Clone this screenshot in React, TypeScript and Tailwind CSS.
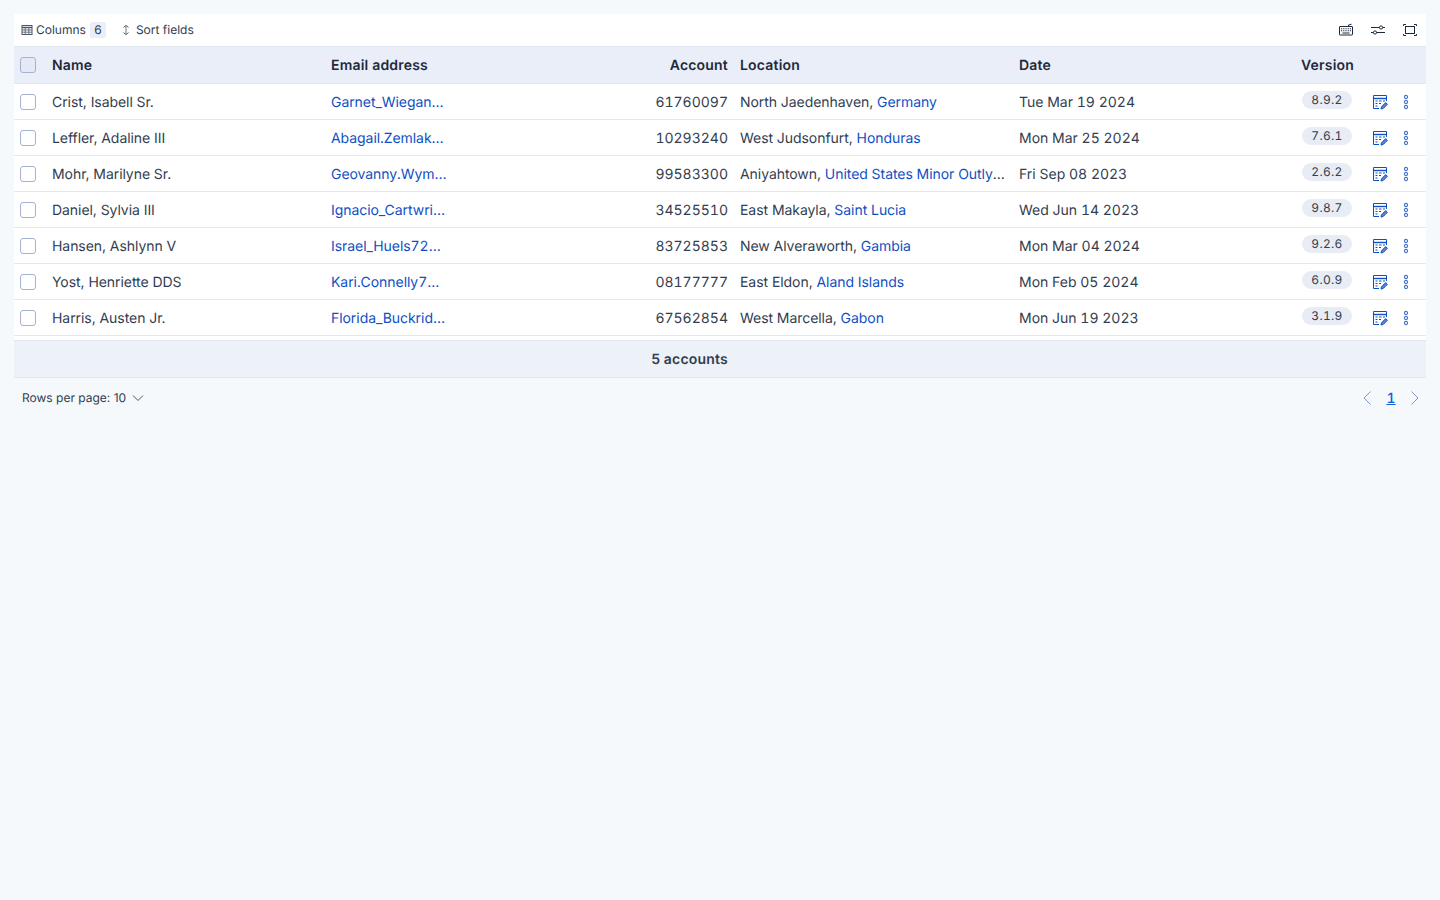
import React from "react"

type Row = {
    name: string
    email: string
    account: string
    city: string
    country: string
    date: string
    version: string
}

const rows: Row[] = [
    { name: "Crist, Isabell Sr.", email: "Garnet_Wiegand42@hotmail.com", account: "61760097", city: "North Jaedenhaven", country: "Germany", date: "Tue Mar 19 2024", version: "8.9.2" },
    { name: "Leffler, Adaline III", email: "Abagail.Zemlak18@gmail.com", account: "10293240", city: "West Judsonfurt", country: "Honduras", date: "Mon Mar 25 2024", version: "7.6.1" },
    { name: "Mohr, Marilyne Sr.", email: "Geovanny.Wyman@yahoo.com", account: "99583300", city: "Aniyahtown", country: "United States Minor Outlying Islands", date: "Fri Sep 08 2023", version: "2.6.2" },
    { name: "Daniel, Sylvia III", email: "Ignacio_Cartwright@gmail.com", account: "34525510", city: "East Makayla", country: "Saint Lucia", date: "Wed Jun 14 2023", version: "9.8.7" },
    { name: "Hansen, Ashlynn V", email: "Israel_Huels72@hotmail.com", account: "83725853", city: "New Alveraworth", country: "Gambia", date: "Mon Mar 04 2024", version: "9.2.6" },
    { name: "Yost, Henriette DDS", email: "Kari.Connelly7@yahoo.com", account: "08177777", city: "East Eldon", country: "Aland Islands", date: "Mon Feb 05 2024", version: "6.0.9" },
    { name: "Harris, Austen Jr.", email: "Florida_Buckridge@gmail.com", account: "67562854", city: "West Marcella", country: "Gabon", date: "Mon Jun 19 2023", version: "3.1.9" },
]

const TableIcon = () => (
    <svg width="12" height="12" viewBox="0 0 12 12" fill="none" stroke="#4a5568" strokeWidth="1">
        <rect x="1" y="1.5" width="10" height="9" />
        <path d="M1 3.5h10" strokeWidth="1.4" />
        <path d="M1 6h10M1 8.2h10M4.2 4v6.5M7.8 4v6.5" strokeWidth="0.8" />
    </svg>
)

const SortIcon = () => (
    <svg width="12" height="12" viewBox="0 0 12 12" fill="none" stroke="#4a5568" strokeWidth="1">
        <path d="M3.6 3.6 6 1.2l2.4 2.4M3.6 8.4 6 10.8l2.4-2.4" />
        <path d="M6 2v8" strokeWidth="0.8" />
    </svg>
)

const KeyboardIcon = () => (
    <svg width="16" height="16" viewBox="0 0 16 16" fill="none" stroke="#1e293b" strokeWidth="1">
        <rect x="1.5" y="4.5" width="13" height="8.5" rx="0.5" />
        <path d="M10.5 4.5V3l3-.8" />
        <path d="M3 6.8h10M3 8.8h10" strokeWidth="1.1" strokeDasharray="1 0.8" />
        <path d="M4.5 11h7" strokeWidth="1" />
    </svg>
)

const SlidersIcon = () => (
    <svg width="16" height="16" viewBox="0 0 16 16" fill="none" stroke="#1e293b" strokeWidth="1">
        <path d="M1 5.5h8.5M12.5 5.5H15M1 10.5h2.5M6.5 10.5H15" />
        <circle cx="11" cy="5.5" r="1.6" />
        <circle cx="5" cy="10.5" r="1.6" />
    </svg>
)

const FullscreenIcon = () => (
    <svg width="16" height="16" viewBox="0 0 16 16" fill="none" stroke="#1e293b" strokeWidth="1">
        <rect x="3.5" y="4.5" width="9" height="7" />
        <path d="M1.5 4V2.5H4M12 2.5h2.5V4M1.5 12v1.5H4M12 13.5h2.5V12" />
    </svg>
)

const EditTableIcon = () => (
    <svg width="16" height="16" viewBox="0 0 16 16" fill="none" stroke="#0f4fc4" strokeWidth="1">
        <path d="M7 14.5H1.5V1.5h13V7" />
        <path d="M1.5 4.5h13" strokeWidth="1.4" />
        <path d="M3.5 7h2M7 7h2.5M11 7h2M3.5 9.5h2M7 9.5h2M3.5 12h2" />
        <path d="m9 15 .5-2.2 4.2-4.2 1.7 1.7-4.2 4.2z" fill="#5b86d8" />
    </svg>
)

const DotsIcon = () => (
    <svg width="6" height="16" viewBox="0 0 6 16" fill="none" stroke="#3f6fcf" strokeWidth="1.1">
        <circle cx="3" cy="3" r="1.6" />
        <circle cx="3" cy="8" r="1.6" />
        <circle cx="3" cy="13" r="1.6" />
    </svg>
)

const Chevron = ({ d, className }: { d: string; className: string }) => (
    <svg width="16" height="16" viewBox="0 0 16 16" fill="none" stroke="currentColor" strokeWidth="1" className={className}>
        <path d={d} />
    </svg>
)

const Checkbox = () => (
    <span className="block w-4 h-4 rounded-[3px] border border-[#a3b3d1] bg-white" />
)

const App = () => {
    return (
        <div className="min-h-[900px] bg-[#f5f9fc] p-[14px] font-['Inter',sans-serif] text-[14px] text-[#323d4f] antialiased [text-rendering:geometricPrecision]">
            <div className="bg-white">
                <div className="flex items-center justify-between h-[33px] pl-[7px] pr-2 border-b border-[#e2e8f0]">
                    <div className="flex items-center text-[12px]">
                        <TableIcon />
                        <span className="ml-[3px]">Columns</span>
                        <span className="ml-1 w-4 h-4 rounded-[2px] bg-[#e9eef7] flex items-center justify-center">6</span>
                        <span className="ml-[14px]"><SortIcon /></span>
                        <span className="ml-1">Sort fields</span>
                    </div>
                    <div className="flex items-center gap-4">
                        <KeyboardIcon />
                        <SlidersIcon />
                        <FullscreenIcon />
                    </div>
                </div>

                <div className="flex items-center h-[37px] bg-[#e9eef8] border-b border-[#e2e6f0] font-semibold text-[#1e293b] tracking-[0.2px]">
                    <div className="w-8 pl-[6px]">
                        <span className="block w-4 h-4 rounded-[3px] border border-[#a3b3d1] bg-[#e4e9f5]" />
                    </div>
                    <div className="w-[279px] pl-[6px]">Name</div>
                    <div className="w-[279px] pl-[6px]">Email address</div>
                    <div className="w-[130px] pr-[6px] text-right">Account</div>
                    <div className="w-[279px] pl-[6px]">Location</div>
                    <div className="w-[279px] pl-[6px]">Date</div>
                    <div className="pl-[9px]">Version</div>
                </div>

                {rows.map((row) => (
                    <div key={row.account} className="flex items-center h-9 border-b border-[#e5e7f0] tracking-[-0.06px]">
                        <div className="w-8 pl-[6px]">
                            <Checkbox />
                        </div>
                        <div className="w-[279px] pl-[6px] pt-0.5">{row.name}</div>
                        <div className="w-[279px] pl-[6px] pt-0.5">
                            <div className="w-[118px] truncate text-[#0f4fc4] tabular-nums">{row.email}</div>
                        </div>
                        <div className="w-[130px] pr-[6px] pt-0.5 text-right tabular-nums tracking-normal">{row.account}</div>
                        <div className="w-[279px] pl-[6px] pt-0.5">
                            <div className="w-[267px] truncate">
                                {row.city}, <span className="text-[#0f4fc4]">{row.country}</span>
                            </div>
                        </div>
                        <div className="w-[279px] pl-[6px] pt-0.5 tabular-nums tracking-normal">{row.date}</div>
                        <div className="w-[74px] pl-[10px] -mt-1">
                            <span className="flex items-center justify-center w-[50px] h-[18px] rounded-full bg-[#e8ecf5] text-[12px] tracking-[0.3px] tabular-nums">
                                {row.version}
                            </span>
                        </div>
                        <div className="flex items-center">
                            <span className="ml-[6px]"><EditTableIcon /></span>
                            <span className="ml-[15px]"><DotsIcon /></span>
                        </div>
                    </div>
                ))}

                <div className="h-1" />
                <div className="flex items-center h-[38px] bg-[#edf1f8] border-y border-[#e2e6f0] font-semibold tracking-[0.2px]">
                    <div className="w-[720px] pr-[6px] text-right">5 accounts</div>
                </div>
            </div>

            <div className="flex items-center justify-between h-10 pl-2 pr-1">
                <div className="flex items-center text-[12px]">
                    Rows per page: 10
                    <Chevron d="M3 5.5 8 10.5l5-5" className="ml-1 text-[#4a5568]" />
                </div>
                <div className="flex items-center">
                    <Chevron d="M10.5 1.5 4 8l6.5 6.5" className="text-[#7f97c7]" />
                    <span className="mx-[10px] w-[10px] text-center font-medium underline tabular-nums text-[#0f5fd8]">1</span>
                    <Chevron d="M5.5 1.5 12 8l-6.5 6.5" className="text-[#7f97c7]" />
                </div>
            </div>
        </div>
    )
}

export default App
